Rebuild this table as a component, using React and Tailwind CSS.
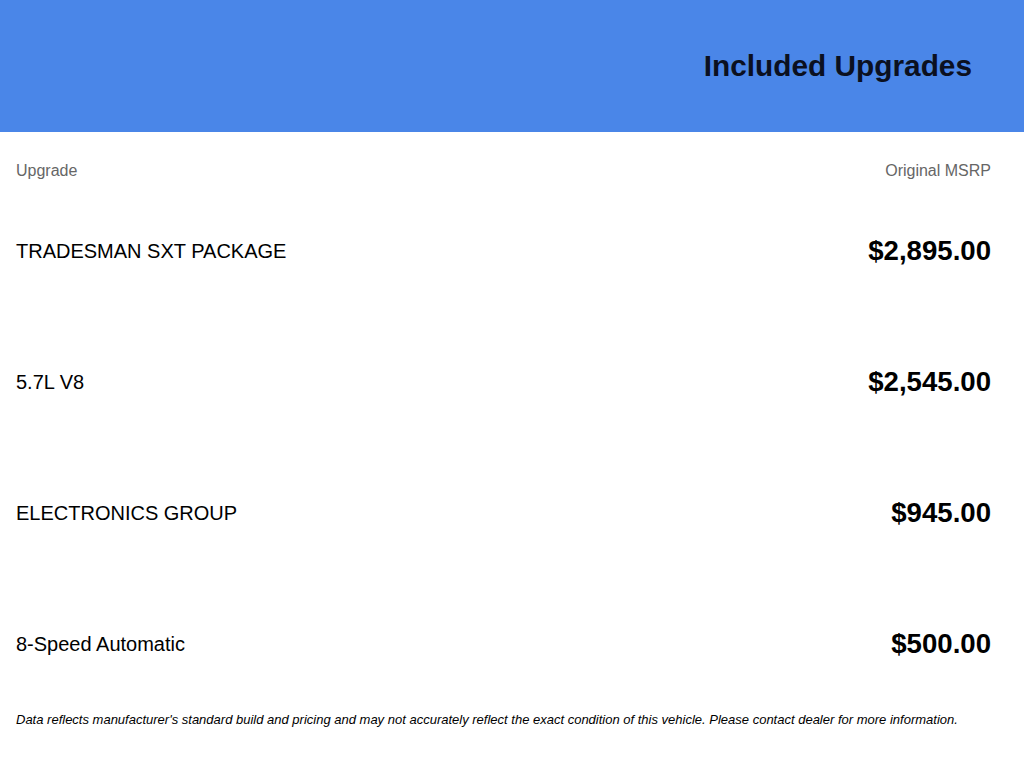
import React from 'react';

const upgrades = [
  { name: 'TRADESMAN SXT PACKAGE', price: '$2,895.00' },
  { name: '5.7L V8', price: '$2,545.00' },
  { name: 'ELECTRONICS GROUP', price: '$945.00' },
  { name: '8-Speed Automatic', price: '$500.00' },
];

function App() {
  return (
    <div className="min-h-screen bg-white font-['Liberation_Sans',Arial,sans-serif] text-black">
      <div className="h-[132px] bg-[#4a86e8] flex items-center justify-end pr-[52px]">
        <h1 className="text-[29.8px] leading-none font-bold text-[#0b1020]">Included Upgrades</h1>
      </div>
      <div className="pl-4 pr-[33px]">
        <div className="flex justify-between pt-[30px] text-[16px] leading-[18px] text-[#666666]">
          <span>Upgrade</span>
          <span>Original MSRP</span>
        </div>
        <div className="mt-[5px]">
          {upgrades.map((item, index) => (
            <div className="h-[131px] flex items-center justify-between" key={index}>
              <span className="text-[20px]">{item.name}</span>
              <span className="text-[27.6px] font-bold">{item.price}</span>
            </div>
          ))}
        </div>
        <p className="mt-[3px] text-[13px] leading-4 italic">
          Data reflects manufacturer's standard build and pricing and may not accurately reflect the exact condition of this vehicle. Please contact dealer for more information.
        </p>
      </div>
    </div>
  );
}

export default App;
